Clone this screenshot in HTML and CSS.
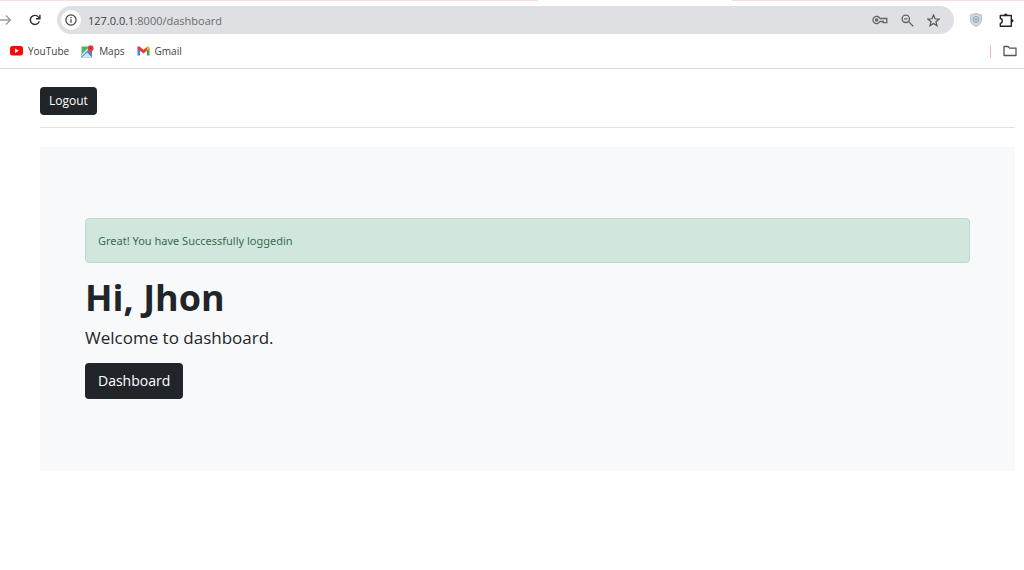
FILE: index.html
```html
<!DOCTYPE html>
<html lang="en">
<head>
    <meta charset="UTF-8">
    <meta name="viewport" content="width=device-width, initial-scale=1.0">
    <title>Dashboard</title>
    <link rel="stylesheet" href="styles.css">
</head>
<body>
    <header class="browser">
        <div class="tab-edge"><span class="active-tab"></span></div>
        <div class="toolbar">
            <button class="icon-btn forward" aria-label="Forward">
                <svg width="12" height="12" viewBox="0 0 12 12" fill="none" stroke="#9a9a9c" stroke-width="1.3"><path d="M0 6h10M6 1.5 10.5 6 6 10.5"/></svg>
            </button>
            <button class="icon-btn reload" aria-label="Reload">
                <svg width="12" height="12" viewBox="0 0 12 12" fill="none" stroke="#2b2c2e" stroke-width="1.4"><path d="M10.3 7.4A4.6 4.6 0 1 1 9.4 2.9L10.6 4.2"/><path d="M10.9.8v4H6.9"/></svg>
            </button>
            <div class="address-bar">
                <button class="icon-btn site-info" aria-label="Site information">
                    <svg width="12" height="12" viewBox="0 0 12 12" fill="none" stroke="#3c3d40" stroke-width="1.2"><circle cx="6" cy="6" r="5.1"/><path d="M6 5.2v3.5M6 3v1.2"/></svg>
                </button>
                <a class="url" href="#"><span>127.0.0.1</span>:8000/dashboard</a>
                <button class="icon-btn" aria-label="Passwords">
                    <svg width="16" height="12" viewBox="0 0 16 12" fill="none" stroke="#626366" stroke-width="1.3"><path d="M7.8 4.5A3.6 3.6 0 1 0 7.8 7.5H10.5M7.8 4.5H14.8V8.7H11.2V6.5"/><circle cx="4.6" cy="6" r="1" fill="#626366"/></svg>
                </button>
                <button class="icon-btn" aria-label="Zoom">
                    <svg width="13" height="13" viewBox="0 0 13 13" fill="none" stroke="#626366" stroke-width="1.3"><circle cx="4.8" cy="4.8" r="3.7"/><path d="m7.6 7.6 4.6 4.6M3 4.8h3.6"/></svg>
                </button>
                <button class="icon-btn" aria-label="Bookmark this page">
                    <svg width="13" height="13" viewBox="0 0 13 13" fill="none" stroke="#55565a" stroke-width="1.2"><path d="m6.5 1 1.5 3.8 4.1.3-3.2 2.6 1.1 4-3.5-2.2L3 11.7l1.1-4L.9 5.1 5 4.8z"/></svg>
                </button>
            </div>
            <button class="icon-btn shield" aria-label="Shield extension">
                <svg width="12" height="14" viewBox="0 0 12 14"><path d="M6 .5 11.4 2v5c0 3-2.3 5.2-5.4 6.5C2.9 12.2.6 10 .6 7V2z" fill="#d3d9e0" stroke="#b3bdc9"/><circle cx="6" cy="6.5" r="3" fill="#c3d7e8" stroke="#8fa5ba"/><path d="M6 5v3M4.5 6.5h3" stroke="#8fa5ba"/></svg>
            </button>
            <button class="icon-btn puzzle" aria-label="Extensions">
                <svg width="15" height="15" viewBox="0 0 15 15"><path d="M1.3 2.5h11v10.8h-11V10.4c2.6-.3 2.6-4.6 0-4.9z" fill="none" stroke="#242528" stroke-width="1.4" stroke-linejoin="round"/><path d="M5 2.4a1.8 1.8 0 0 1 3.6 0zM12.7 6a1.8 1.8 0 0 1 0 3.6z" fill="#242528"/></svg>
            </button>
        </div>
        <nav class="bookmarks">
            <a href="#">
                <svg width="13" height="10" viewBox="0 0 13 10"><rect width="13" height="9.5" rx="2.5" fill="#f30b0b"/><path d="M5 2.6v4.3l3.8-2.1z" fill="#fff"/></svg>
                YouTube
            </a>
            <a href="#">
                <svg width="13" height="13" viewBox="0 0 13 13"><path d="M.5 1.5h10v11H.5z" fill="#4db36a"/><path d="m.5 12.500 5.500-5.500 5 5.500z" fill="#d8e3ef"/><path d="M.5 12.500V9L4 6l2 1.500z" fill="#4285f4"/><path d="m5.500 6.500 5.500 6V6L8 4z" fill="#4285f4"/><path d="m.5 10.500 7-7" stroke="#e8edf2" stroke-width="1.5"/><path d="M9.600 9C9.400 6.800 6.600 6 6.600 3.300a3 3 0 0 1 6 0C12.600 6 9.900 6.800 9.600 9z" fill="#e2443a"/><circle cx="9.600" cy="3.200" r=".9" fill="#8f241e"/></svg>
                Maps
            </a>
            <a href="#">
                <svg width="13" height="10" viewBox="0 0 13 10"><path d="M.5 2v7.5h2.6V4z" fill="#4285f4"/><path d="M12.5 2v7.5H9.9V4z" fill="#34a853"/><path d="M9.9 1.5v3.3l2.6-2V1.5C12.5.2 11 0 9.9 1z" fill="#fbbc04"/><path d="M.5 1.5v1.3l6 4.6 3.4-2.6V1L6.5 3.7 3.1 1C2 0 .5.2.5 1.500z" fill="#e53935"/></svg>
                Gmail
            </a>
            <span class="divider"></span>
            <button class="icon-btn" aria-label="All bookmarks">
                <svg width="14" height="12" viewBox="0 0 14 12" fill="none" stroke="#55565a" stroke-width="1.3"><path d="M1 1.5h4l1.5 1.6H13v7.4H1z" stroke-linejoin="round"/></svg>
            </button>
        </nav>
    </header>

    <main class="page">
        <div class="page-header">
            <button class="btn btn-small">Logout</button>
        </div>

        <section class="welcome">
            <div class="alert" role="alert">Great! You have Successfully loggedin</div>
            <h1>Hi, Jhon</h1>
            <p>Welcome to dashboard.</p>
            <a class="btn btn-large" href="#">Dashboard</a>
        </section>
    </main>
</body>
</html>
```
FILE: styles.css
```css
* {
    box-sizing: border-box;
}
body {
    margin: 0;
    background: #fff;
    color: #212529;
    font-family: 'Segoe UI', 'Open Sans', 'Noto Sans', sans-serif;
    font-size: 12px;
}
button {
    font-family: inherit;
    cursor: pointer;
}
a {
    color: inherit;
    text-decoration: none;
}

/* browser bar */
.browser {
    border-bottom: 1px solid #d9dadd;
}
.tab-edge {
    display: flex;
    justify-content: center;
    height: 1px;
    background: #f6dde3;
}
.active-tab {
    width: 19%;
    margin-left: 24%;
    background: #fff;
}
.toolbar {
    display: flex;
    align-items: center;
    padding: 5px 10px 0 0;
}
.icon-btn {
    display: flex;
    align-items: center;
    justify-content: center;
    padding: 0;
    border: 0;
    background: none;
}
.reload {
    margin: 0 16px 0 17px;
}
.address-bar {
    display: flex;
    flex: 1;
    align-items: center;
    gap: 13px;
    height: 28px;
    padding: 0 14px 0 4px;
    border-radius: 14px;
    background: #dfe0e3;
}
.site-info {
    width: 20px;
    height: 20px;
    border-radius: 50%;
    background: #fff;
}
.url {
    flex: 1;
    margin-left: -6px;
    color: #6a6b6e;
    font-size: 11px;
}
.url span {
    color: #3c3d40;
}
.shield {
    margin: 0 17px 0 16px;
}
.bookmarks {
    display: flex;
    align-items: center;
    gap: 12px;
    height: 34px;
    padding: 0 7px 0 10px;
    color: #3f4043;
    font-size: 10px;
}
.bookmarks a {
    display: flex;
    align-items: center;
    gap: 5px;
}
.divider {
    width: 1px;
    height: 13px;
    margin-left: auto;
    background: #f3b8c4;
}

/* page */
.page {
    padding: 18px 9px 0 40px;
}
.page-header {
    margin-bottom: 19px;
    padding-bottom: 12px;
    border-bottom: 1px solid #dee2e6;
}
.btn {
    display: block;
    width: fit-content;
    border: 0;
    border-radius: 4px;
    background: #212529;
    color: #fff;
}
.btn-small {
    padding: 4px 9px;
    font-size: 12px;
    font-weight: 500;
    line-height: 20px;
}
.btn-large {
    padding: 6px 13px;
    font-size: 14px;
    line-height: 24px;
}
.welcome {
    padding: 71px 45px 72px;
    background: #f8f9fb;
}
.alert {
    padding: 12px;
    border: 1px solid #badbcc;
    border-radius: 4px;
    background: #d1e7dd;
    color: #3b6a52;
    font-family: 'Segoe UI', 'Noto Sans', sans-serif;
    font-size: 11px;
    line-height: 19px;
}
.welcome h1 {
    margin: 13px 0 5px;
    font-size: 36px;
    font-weight: 700;
    line-height: 44px;
}
.welcome p {
    margin: 0 0 12px;
    font-size: 17px;
    line-height: 26px;
}
```
